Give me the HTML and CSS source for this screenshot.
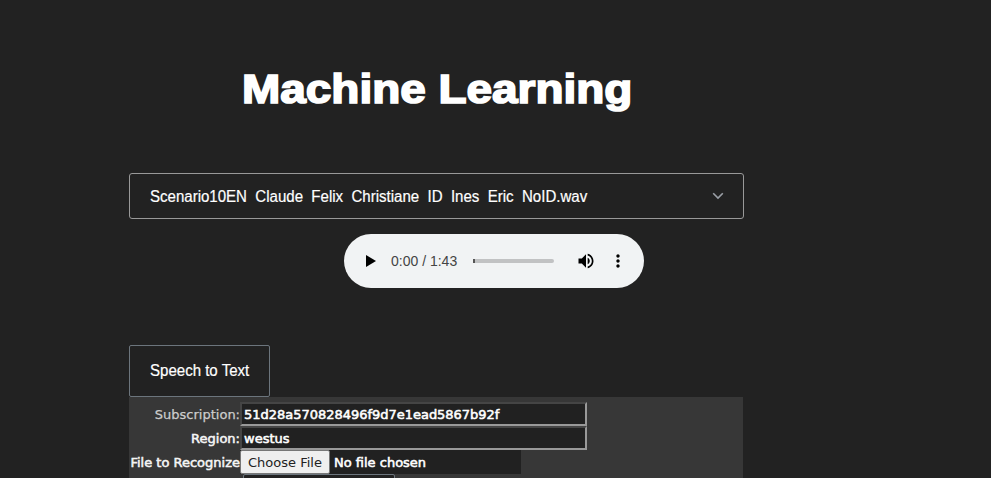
FILE: index.html
```
<!DOCTYPE html>
<html lang="en">
<head>
<meta charset="utf-8">
<title>Machine Learning</title>
<link rel="stylesheet" href="styles.css">
</head>
<body>
<main class="page">
  <h1 class="title"><span>Machine Learning</span></h1>
  <div class="select">
    <span class="select-text">Scenario10EN&nbsp; Claude&nbsp; Felix&nbsp; Christiane&nbsp; ID&nbsp; Ines&nbsp; Eric&nbsp; NoID.wav</span>
    <svg class="chevron" width="12" height="8" viewBox="0 0 12 8"><path d="M1.2 1.2 6 6l4.800-4.800" fill="none" stroke="#9a9fa6" stroke-width="1.600"/></svg>
  </div>
  <div class="player">
    <svg class="play" width="10" height="12" viewBox="0 0 10 12"><path d="M0 0v12l10-6z"/></svg>
    <span class="time">0:00 / 1:43</span>
    <div class="track"><div class="thumb"></div></div>
    <svg class="volume" width="20" height="20" viewBox="0 0 24 24"><path d="M3 9v6h4l5 5V4L7 9H3zm13.500 3c0-1.770-1.020-3.290-2.500-4.030v8.050c1.480-.730 2.500-2.250 2.500-4.020zM14 3.230v2.060c2.890.860 5 3.540 5 6.710s-2.110 5.850-5 6.710v2.060c4.010-.910 7-4.490 7-8.770s-2.990-7.860-7-8.770z"/></svg>
    <svg class="more" width="20" height="20" viewBox="0 0 24 24"><path d="M12 8c1.100 0 2-.9 2-2s-.9-2-2-2-2 .9-2 2 .9 2 2 2zm0 2c-1.100 0-2 .9-2 2s.9 2 2 2 2-.9 2-2-.9-2-2-2zm0 6c-1.100 0-2 .9-2 2s.9 2 2 2 2-.9 2-2-.9-2-2-2z"/></svg>
  </div>
  <div class="tab"><span>Speech to Text</span></div>
  <section class="panel">
    <div class="row"><span class="label light">Subscription:</span><div class="input"><span class="key">51d28a570828496f9d7e1ead5867b92f</span></div></div>
    <div class="row"><span class="label region">Region:</span><div class="input"><span class="value">westus</span></div></div>
    <div class="row"><span class="label file">File to Recognize</span><div class="file-input"><span class="choose"><span>Choose File</span></span><span class="none">No file chosen</span></div></div>
    <div class="next"></div>
  </section>
</main>
</body>
</html>
```
FILE: styles.css
```
* { box-sizing: border-box; }
body { margin: 0; height: 478px; overflow: hidden; background: #222; color: #fff; font: 16px "Liberation Sans", Arial, sans-serif; }
.page { width: 615px; margin-left: 129px; padding-top: 64px; }
.title { margin: 0 0 59px; height: 50px; padding-left: 113px; font: bold 41px/50px "Liberation Sans", Arial, sans-serif; white-space: nowrap; }
.title span { display: inline-block; transform: scaleX(1.12); transform-origin: 0 50%; -webkit-text-stroke: 1.700px #fff; }
.select { display: flex; align-items: center; justify-content: space-between; height: 46px; padding: 0 19px 0 20px; border: 1px solid #999; border-radius: 3px; white-space: nowrap; }
.select-text, .tab span { font-size: 16px; line-height: 18px; transform: scaleX(.94); transform-origin: 0 50%; -webkit-text-stroke: .2px #fff; }
.select-text { padding-top: 2px; }
.player { display: flex; align-items: center; width: 300px; height: 54px; margin: 15px 0 57px 215px; padding-left: 22px; border-radius: 27px; background: #f1f3f4; color: #444; }
.time { width: 67px; margin-left: 15px; font-size: 14px; white-space: nowrap; }
.track { width: 81px; height: 4px; margin-left: 15px; border-radius: 2px; background: #c1c2c3; }
.thumb { width: 2px; height: 4px; background: #555; }
.volume { margin-left: 22px; }
.more { margin-left: 12px; }
.tab { display: flex; align-items: center; width: 141px; height: 52px; padding-left: 20px; border: 1px solid #6c757d; border-radius: 2px; white-space: nowrap; }
.panel { width: 614px; height: 81px; padding-top: 5px; background: #373737; font: 13px/16px "DejaVu Sans", Verdana, sans-serif; -webkit-text-stroke: .550px; overflow: hidden; }
.row { display: flex; height: 24px; align-items: center; white-space: nowrap; }
.label { display: flex; justify-content: flex-end; width: 111px; padding-top: 2px; color: #f5f5f5; }
.light { color: #ccc; -webkit-text-stroke: .25px; }
.key { letter-spacing: -.020px; }
.input { display: flex; align-items: center; width: 347px; height: 24px; padding: 2px 0 0 2px; background: #212121; border: 2px solid; border-color: #454545 #999 #999 #454545; }
.file-input { display: flex; align-items: center; width: 281px; height: 24px; background: #212121; }
.none { padding-top: 2px; }
.choose { display: flex; align-items: center; justify-content: center; width: 90px; height: 24px; padding-top: 2px; margin-right: 4px; background: #efefef; border: 1px solid #777; border-radius: 2px; color: #222; -webkit-text-stroke: 0; }
.next { width: 152px; height: 20px; margin: 0 0 0 114px; border: 1px solid #6c757d; border-radius: 2px; background: #222; }
```
